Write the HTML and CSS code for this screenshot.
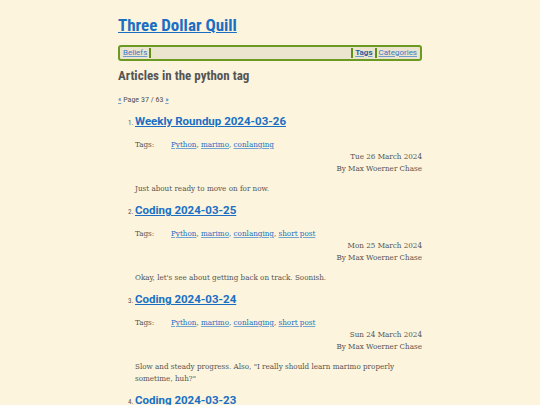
FILE: index.html
```html
<!DOCTYPE html>
<html>
<head>
<meta charset="utf-8">
<link rel="stylesheet" href="styles.css">
</head>
<body>
<div class="page">
  <h1 class="site-title"><a href="#">Three Dollar Quill</a></h1>
  <nav class="nav">
    <a href="#" class="nav-link">Beliefs</a><span class="sep"></span>
    <span class="nav-fill"></span>
    <span class="sep"></span><a href="#" class="nav-link current">Tags</a><span class="sep"></span><a href="#" class="nav-link">Categories</a>
  </nav>
  <h2 class="section-title">Articles in the python tag</h2>
  <p class="pager"><a href="#">«</a> Page 37 / 63 <a href="#">»</a></p>
  <ol class="articles" start="1">
    <li class="article">
      <h3 class="article-title"><a href="#">Weekly Roundup 2024-03-26</a></h3>
      <div class="tags"><span class="tags-label">Tags:</span><span><a href="#">Python</a>, <a href="#">marimo</a>, <a href="#">conlanging</a></span></div>
      <div class="meta">Tue 26 March 2024</div>
      <div class="meta">By Max Woerner Chase</div>
      <p class="summary">Just about ready to move on for now.</p>
    </li>
    <li class="article">
      <h3 class="article-title"><a href="#">Coding 2024-03-25</a></h3>
      <div class="tags"><span class="tags-label">Tags:</span><span><a href="#">Python</a>, <a href="#">marimo</a>, <a href="#">conlanging</a>, <a href="#">short post</a></span></div>
      <div class="meta">Mon 25 March 2024</div>
      <div class="meta">By Max Woerner Chase</div>
      <p class="summary">Okay, let's see about getting back on track. Soonish.</p>
    </li>
    <li class="article">
      <h3 class="article-title"><a href="#">Coding 2024-03-24</a></h3>
      <div class="tags"><span class="tags-label">Tags:</span><span><a href="#">Python</a>, <a href="#">marimo</a>, <a href="#">conlanging</a>, <a href="#">short post</a></span></div>
      <div class="meta">Sun 24 March 2024</div>
      <div class="meta">By Max Woerner Chase</div>
      <p class="summary">Slow and steady progress. Also, "I really should learn marimo properly sometime, huh?"</p>
    </li>
    <li class="article">
      <h3 class="article-title"><a href="#">Coding 2024-03-23</a></h3>
      <div class="tags"><span class="tags-label">Tags:</span><span><a href="#">Python</a>, <a href="#">marimo</a>, <a href="#">conlanging</a>, <a href="#">short post</a></span></div>
      <div class="meta">Sat 23 March 2024</div>
      <div class="meta">By Max Woerner Chase</div>
      <p class="summary">More progress.</p>
    </li>
  </ol>
</div>
</body>
</html>
```
FILE: styles.css
```css
html, body {
  margin: 0;
  padding: 0;
  background: #fcf4dc;
}
body {
  font-family: "DejaVu Serif", serif;
  font-stretch: condensed;
  font-size: 8px;
  line-height: 12px;
  color: #555;
}
.page {
  width: 304px;
  margin: 0 auto;
  padding-top: 14px;
}
a { color: #1a6fc4; text-decoration-color: rgba(26, 111, 196, 0.6); }
.site-title {
  margin: 0;
  font-family: Roboto, sans-serif;
  font-weight: 700;
  font-size: 17px;
  line-height: 22px;
}
.site-title a { color: #1a6fc4; text-decoration-color: #1a6fc4; }
.nav {
  display: flex;
  align-items: stretch;
  margin-top: 9px;
  border: 2px solid #6b9a22;
  border-radius: 3px;
  background: #ebe4cf;
  height: 12px;
  font-family: Roboto, sans-serif;
  font-size: 8px;
  line-height: 12px;
  font-stretch: normal;
  padding: 0 1px;
}
.nav-link { color: #3b79c4; padding: 0 2px; }
.nav-link.current { font-weight: 700; color: #2a5f9e; }
.sep { width: 2px; background: #5f8f1a; margin: 1px 0; }
.nav-fill { flex: 1; }
.section-title {
  margin: 7px 0 0;
  font-family: Roboto, sans-serif;
  font-weight: 700;
  font-size: 13px;
  line-height: 16px;
  color: #555;
}
.pager {
  margin: 10px 0 0;
  font-family: Roboto, sans-serif;
  font-size: 8px;
  line-height: 12px;
}
.articles {
  margin: 7px 0 0;
  padding-left: 17px;
}
.article::marker { font-size: 7px; font-family: Roboto, sans-serif; }
.article-title {
  margin: 0;
  font-family: Roboto, sans-serif;
  font-stretch: normal;
  font-weight: 700;
  font-size: 11.5px;
  line-height: 16px;
}
.article-title a { text-decoration-color: #1a6fc4; }
.tags {
  display: flex;
  margin-top: 10px;
}
.tags-label { width: 36px; }
.meta { text-align: right; }
.summary { margin: 8px 0 7px; }
```
